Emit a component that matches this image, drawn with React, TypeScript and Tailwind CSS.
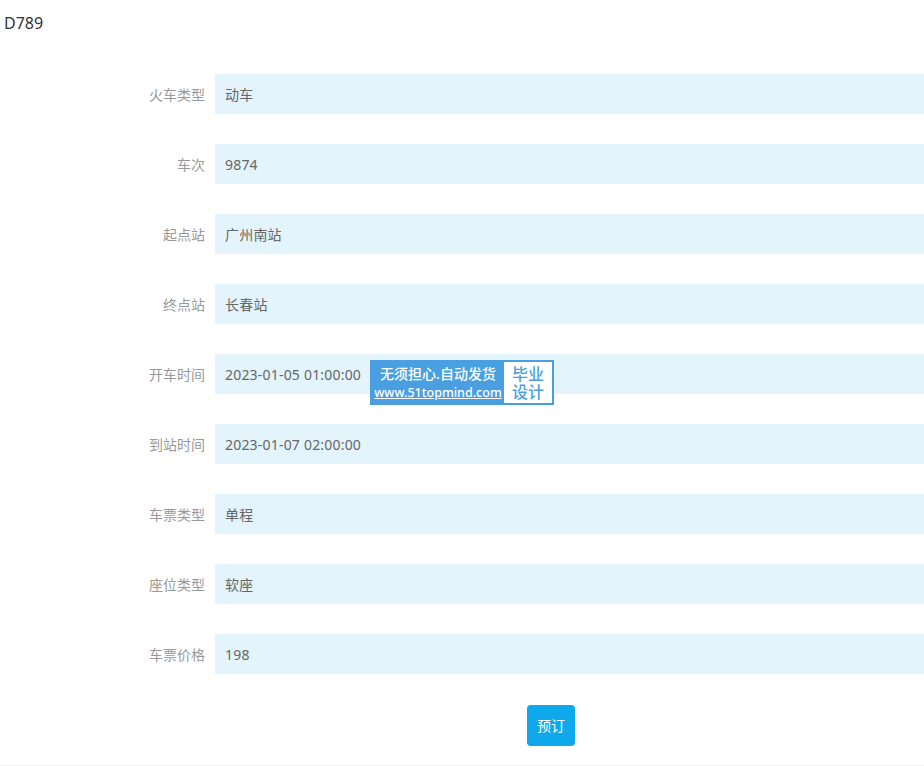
const rows: { label: string; value: string }[] = [
  { label: "火车类型", value: "动车" },
  { label: "车次", value: "9874" },
  { label: "起点站", value: "广州南站" },
  { label: "终点站", value: "长春站" },
  { label: "开车时间", value: "2023-01-05 01:00:00" },
  { label: "到站时间", value: "2023-01-07 02:00:00" },
  { label: "车票类型", value: "单程" },
  { label: "座位类型", value: "软座" },
  { label: "车票价格", value: "198" },
];

export default function App() {
  return (
    <div
      className="relative w-[924px] h-[766px] bg-white overflow-hidden border-b border-[#f2f2f2]"
      style={{ fontFamily: '"Noto Sans", "Noto Sans CJK SC", sans-serif' }}
    >
      <div className="pl-1 pt-[11px] text-[16px] leading-[24px] text-[#333]">D789</div>

      <div className="mt-[39px] flex flex-col gap-[30px]">
        {rows.map((row) => (
          <div key={row.label} className="flex items-center h-10">
            <label className="w-[205px] text-right text-[14px] text-[#999]">{row.label}</label>
            <div className="ml-[10px] flex-1 h-10 bg-[#e3f4fc] flex items-center pl-[10px] text-[14px] text-[#666] tracking-[0.2px]">
              {row.value}
            </div>
          </div>
        ))}
      </div>

      <div className="mt-[31px] flex pl-[527px]">
        <button className="w-12 h-[41px] rounded bg-[#0ea9eb] text-white text-[14px]">预订</button>
      </div>

      {/* watermark overlay */}
      <div className="absolute left-[370px] top-[360px] w-[184px] h-[45px] flex bg-[#4a9fe0] p-[2px]">
        <div className="w-[132px] flex flex-col justify-center items-center text-white">
          <span className="text-[14px] leading-[20px] font-medium">无须担心.自动发货</span>
          <span className="text-[12.5px] leading-[17px] font-medium underline">www.51topmind.com</span>
        </div>
        <div className="flex-1 bg-white flex flex-col justify-center items-center text-[#4a9fe0] text-[16px] leading-[18px] font-medium">
          <span>毕业</span>
          <span>设计</span>
        </div>
      </div>
    </div>
  );
}
